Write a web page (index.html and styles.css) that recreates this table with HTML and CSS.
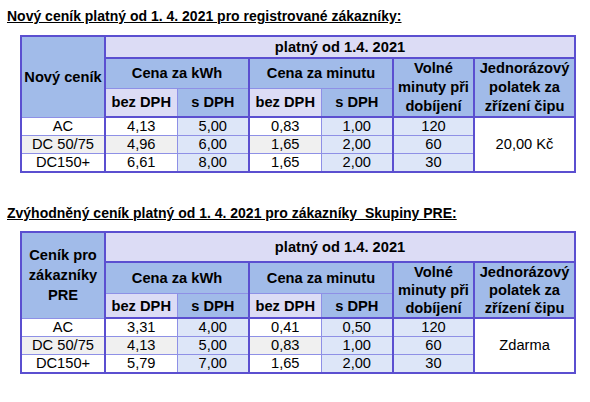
FILE: index.html
```html
<!DOCTYPE html>
<html lang="cs">
<head>
  <meta charset="utf-8" />
  <title>Ceník dobíjení</title>
  <link rel="stylesheet" href="styles.css">
</head>
<body>
  <h2 class="title">Nový ceník platný od 1. 4. 2021 pro registrované zákazníky:</h2>
  <table class="price">
    <colgroup>
      <col class="w-name"><col class="w-num"><col class="w-num"><col class="w-num"><col class="w-num"><col class="w-free"><col class="w-fee">
    </colgroup>
    <tr class="h-a">
      <th rowspan="3" class="blue k">Nový ceník</th>
      <th colspan="6" class="lav kb">platný od 1.4. 2021</th>
    </tr>
    <tr class="h-b">
      <th colspan="2" class="blue k">Cena za kWh</th>
      <th colspan="2" class="blue k">Cena za minutu</th>
      <th rowspan="2" class="blue k kb snug">Volné minuty při dobíjení</th>
      <th rowspan="2" class="blue kb snug">Jednorázový polatek za zřízení čipu</th>
    </tr>
    <tr class="h-c">
      <th class="lav kb">bez DPH</th>
      <th class="blue k kb">s DPH</th>
      <th class="lav kb">bez DPH</th>
      <th class="blue k kb">s DPH</th>
    </tr>
    <tr class="row">
      <td class="k">AC</td><td>4,13</td><td class="pale k">5,00</td><td>0,83</td><td class="pale k">1,00</td><td class="pale k">120</td>
      <td rowspan="3">20,00 Kč</td>
    </tr>
    <tr class="row alt">
      <td class="k">DC 50/75</td><td>4,96</td><td class="pale k">6,00</td><td>1,65</td><td class="pale k">2,00</td><td class="pale k">60</td>
    </tr>
    <tr class="row">
      <td class="k">DC150+</td><td>6,61</td><td class="pale k">8,00</td><td>1,65</td><td class="pale k">2,00</td><td class="pale k">30</td>
    </tr>
  </table>

  <h2 class="title second">Zvýhodněný ceník platný od 1. 4. 2021 pro zákazníky&nbsp; Skupiny PRE:</h2>
  <table class="price compact">
    <colgroup>
      <col class="w-name"><col class="w-num"><col class="w-num"><col class="w-num"><col class="w-num"><col class="w-free"><col class="w-fee">
    </colgroup>
    <tr class="h-a2">
      <th rowspan="3" class="blue k">Ceník pro zákazníky PRE</th>
      <th colspan="6" class="lav kb">platný od 1.4. 2021</th>
    </tr>
    <tr class="h-b2">
      <th colspan="2" class="blue k">Cena za kWh</th>
      <th colspan="2" class="blue k">Cena za minutu</th>
      <th rowspan="2" class="blue k kb tight">Volné minuty při dobíjení</th>
      <th rowspan="2" class="blue kb tight">Jednorázový polatek za zřízení čipu</th>
    </tr>
    <tr class="h-c2">
      <th class="lav kb">bez DPH</th>
      <th class="blue k kb">s DPH</th>
      <th class="lav kb">bez DPH</th>
      <th class="blue k kb">s DPH</th>
    </tr>
    <tr class="row">
      <td class="k">AC</td><td>3,31</td><td class="pale k">4,00</td><td>0,41</td><td class="pale k">0,50</td><td class="pale k">120</td>
      <td rowspan="3">Zdarma</td>
    </tr>
    <tr class="row alt">
      <td class="k">DC 50/75</td><td>4,13</td><td class="pale k">5,00</td><td>0,83</td><td class="pale k">1,00</td><td class="pale k">60</td>
    </tr>
    <tr class="row">
      <td class="k">DC150+</td><td>5,79</td><td class="pale k">7,00</td><td>1,65</td><td class="pale k">2,00</td><td class="pale k">30</td>
    </tr>
  </table>
</body>
</html>
```

FILE: styles.css
```css
:root {
  --thick: #5b4fd0;
  --thin: #8e90e6;
  --blue: #a1bbe9;
  --lav: #dcdcf5;
  --pale: #dde6f8;
  --gray: #f0f0f0;
}

* { box-sizing: border-box; }

body {
  margin: 0;
  padding: 8px 7px;
  font-family: "Liberation Sans", Arial, sans-serif;
  color: #000;
  background: #fff;
}

.title {
  margin: 0;
  font-size: 14px;
  line-height: 16px;
  font-weight: bold;
  text-decoration: underline;
}

.title.second {
  margin-top: 32px;
}

.price {
  border-collapse: collapse;
  border: 2px solid var(--thick);
  table-layout: fixed;
  width: 554px;
  margin: 11px 0 0 13px;
  font-size: 14.67px;
}

.price.compact {
  margin-top: 10px;
}

.w-name { width: 84px; }
.w-num { width: 72px; }
.w-free { width: 81px; }
.w-fee { width: 101px; }

.price th, .price td {
  border: 1px solid var(--thin);
  padding: 0;
  text-align: center;
  vertical-align: middle;
}

.price th {
  font-weight: bold;
  line-height: 20px;
}

.price th.snug {
  line-height: 19px;
}

.price th.tight {
  line-height: 18px;
}

.price td {
  line-height: 17px;
  background: #fff;
}

.price .k { border-right: 2px solid var(--thick); }
.price .kb { border-bottom: 2px solid var(--thick); }

.blue { background: var(--blue); }
.lav { background: var(--lav); }
.price td.pale { background: var(--pale); }
.price .alt td { background: var(--gray); }
.price .alt td.pale { background: var(--pale); }

.h-a { height: 21px; }
.h-b { height: 30px; }
.h-c { height: 29px; }
.h-a2 { height: 30px; }
.h-b2 { height: 31px; }
.h-c2 { height: 24px; }
.row { height: 18px; }
```
